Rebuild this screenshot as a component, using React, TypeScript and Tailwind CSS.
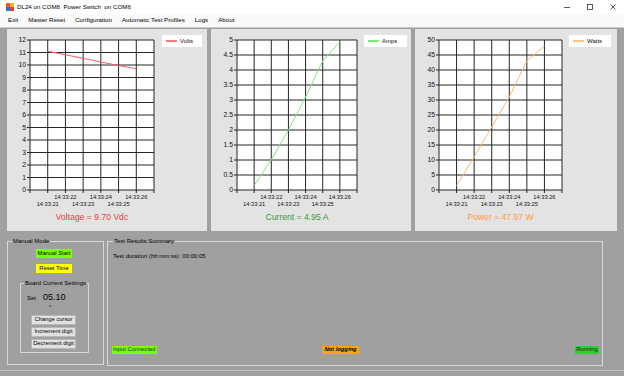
import React from 'react';

const times = ['14:33:21', '14:33:22', '14:33:23', '14:33:24', '14:33:25', '14:33:26'];

interface ChartProps {
  width: number;
  plotL: number;
  plotR: number;
  max: number;
  step: number;
  data: number[];
  line: string;
  legendLine: string;
  legend: string;
  legendX: number;
  legendW: number;
  title: string;
  titleColor: string;
}

function Chart({ width, plotL, plotR, max, step, data, line, legendLine, legend, legendX, legendW, title, titleColor }: ChartProps) {
  const top = 11;
  const bottom = 161;
  const n = Math.round(max / step);
  const dy = (bottom - top) / n;
  const dx = (plotR - plotL) / 7;
  const yOf = (v: number) => bottom - (v / max) * (bottom - top);
  const points = data.map((v, i) => `${plotL + (i + 1) * dx},${yOf(v)}`).join(' ');

  return (
    <div className="bg-[#e3e3e3] h-[202px] shrink-0" style={{ width }}>
      <svg width={width} height={202} className="block font-['Liberation_Sans',Arial,sans-serif]">
        <rect x={plotL} y={top} width={plotR - plotL} height={bottom - top} fill="#ffffff" />
        {Array.from({ length: n + 1 }).map((_, i) => {
          const y = bottom - i * dy;
          return (
            <g key={`h${i}`}>
              <line x1={plotL - 3} x2={plotR} y1={y} y2={y} stroke="#262626" strokeWidth={1} />
              <text x={plotL - 4} y={y + 2.4} textAnchor="end" fontSize={6.8} fill="#111">
                {String(i * step)}
              </text>
            </g>
          );
        })}
        {Array.from({ length: 8 }).map((_, k) => {
          const x = plotL + k * dx;
          return <line key={`v${k}`} x1={x} x2={x} y1={top} y2={bottom + 3} stroke="#262626" strokeWidth={1} />;
        })}
        <polyline points={points} fill="none" stroke={line} strokeWidth={1} />
        {times.map((t, i) => (
          <text
            key={t}
            x={plotL + (i + 1) * dx}
            y={i % 2 === 0 ? 177 : 170}
            textAnchor="middle"
            fontSize={5.7}
            fill="#111"
          >
            {t}
          </text>
        ))}
        <rect x={legendX} y={6} width={legendW} height={12} fill="#ffffff" />
        <line x1={legendX + 4} x2={legendX + 15} y1={12} y2={12} stroke={legendLine} strokeWidth={1.2} />
        <text x={legendX + 18} y={14.2} fontSize={6} fill="#111">
          {legend}
        </text>
        <text x={(plotL + plotR) / 2} y={191} textAnchor="middle" fontSize={8.6} fill={titleColor}>
          {title}
        </text>
      </svg>
    </div>
  );
}

function WinButton({ label }: { label: string }) {
  return (
    <div className="w-[45px] h-[10px] bg-[#e1e1e1] border border-[#b8b8b8] flex items-center justify-center text-[5.8px] leading-none text-black">
      {label}
    </div>
  );
}

export default function App() {
  return (
    <div className="w-[624px] h-[376px] bg-[#a0a0a0] overflow-hidden font-['Liberation_Sans',Arial,sans-serif] text-black">
      {/* title bar */}
      <div className="h-[14px] bg-white flex items-center pl-[6px] pr-[6px]">
        <svg width="8" height="8" viewBox="0 0 8 8" className="shrink-0">
          <rect x="0" y="0" width="4" height="4" fill="#f05a28" />
          <rect x="4" y="0" width="4" height="4" fill="#f7b52c" />
          <rect x="0" y="4" width="4" height="4" fill="#2f6fd6" />
          <rect x="4" y="4" width="4" height="4" fill="#e23c3c" />
        </svg>
        <span className="ml-[3px] text-[6.2px] leading-none whitespace-pre">DL24 on COM8  Power Switch  on COM6</span>
        <div className="ml-auto flex items-center gap-[17px] pr-[2px]">
          <svg width="6" height="6" viewBox="0 0 6 6">
            <line x1="0" y1="3.5" x2="6" y2="3.5" stroke="#333" strokeWidth="0.8" />
          </svg>
          <svg width="6" height="6" viewBox="0 0 6 6">
            <rect x="0.5" y="0.5" width="5" height="5" fill="none" stroke="#333" strokeWidth="0.8" />
          </svg>
          <svg width="6" height="6" viewBox="0 0 6 6">
            <path d="M0.5 0.5 L5.5 5.5 M5.5 0.5 L0.5 5.5" stroke="#333" strokeWidth="0.8" />
          </svg>
        </div>
      </div>

      {/* menu */}
      <div className="h-[14px] bg-[#fafafa] border-b border-[#c9c9c9] flex items-center gap-[10px] pl-[8px] text-[6.2px] leading-none">
        <span>Exit</span>
        <span>Master Reset</span>
        <span>Configuration</span>
        <span>Automatic Test Profiles</span>
        <span>Logs</span>
        <span>About</span>
      </div>

      {/* charts */}
      <div className="flex gap-[4px] pl-[7px] pt-[1px]">
        <Chart
          width={200}
          plotL={23}
          plotR={147}
          max={12}
          step={1}
          data={[11.1, 10.82, 10.53, 10.24, 9.96, 9.7]}
          line="#ff5a6e"
          legendLine="#ff2020"
          legend="Volts"
          legendX={155}
          legendW={40}
          title="Voltage = 9.70 Vdc"
          titleColor="#f23a3a"
        />
        <Chart
          width={200}
          plotL={26}
          plotR={146}
          max={5}
          step={0.5}
          data={[0.15, 1.0, 2.0, 3.1, 4.3, 4.95]}
          line="#7ee87e"
          legendLine="#20e020"
          legend="Amps"
          legendX={153}
          legendW={43}
          title="Current = 4.95 A"
          titleColor="#3a9a3a"
        />
        <Chart
          width={202}
          plotL={24}
          plotR={147}
          max={50}
          step={5}
          data={[1.5, 11, 21, 31, 43, 48]}
          line="#ffb868"
          legendLine="#ff9a30"
          legend="Watts"
          legendX={154}
          legendW={42}
          title="Power = 47.97 W"
          titleColor="#ff9a3a"
        />
      </div>

      {/* bottom */}
      <div className="flex gap-[3px] pl-[7px] pt-[6px]">
        <fieldset className="w-[97px] h-[128px] border border-[#d9d9d9] flex flex-col">
          <legend className="ml-[4px] px-[1px] text-[6px] leading-[8px]">Manual Mode</legend>
          <div className="flex flex-col">
            <div className="ml-[28px] mt-[4px] w-[36px] h-[9px] bg-[#7cff00] flex items-center justify-center text-[5.8px] leading-none">
              Manual Start
            </div>
            <div className="ml-[28px] mt-[6px] w-[36px] h-[9px] bg-[#ffff00] flex items-center justify-center text-[5.8px] leading-none">
              Reset Time
            </div>
            <fieldset className="ml-[12px] mt-[6px] w-[69px] h-[74px] border border-[#d9d9d9]">
              <legend className="ml-[3px] px-[1px] text-[6px] leading-[8px]">Board Current Settings</legend>
              <div className="flex items-baseline pl-[6px] mt-[6px] h-[12px]">
                <span className="text-[6px] leading-none">Set</span>
                <span className="ml-[7px] text-[9px] leading-none">05.10</span>
              </div>
              <div className="pl-[28px] h-[6px] text-[5px] leading-none">^</div>
              <div className="flex flex-col gap-[2px] pl-[10px] mt-[4px]">
                <WinButton label="Change cursor" />
                <WinButton label="Increment digit" />
                <WinButton label="Decrement digit" />
              </div>
            </fieldset>
          </div>
        </fieldset>

        <fieldset className="w-[496px] h-[129px] border border-[#d9d9d9] pl-[5px]">
          <legend className="px-[1px] text-[6px] leading-[8px]">Test Results Summary</legend>
          <div className="h-[120px] flex flex-col justify-between pt-[7px] pb-[11px]">
            <div className="text-[6px] leading-[8px] whitespace-pre">Test duration (hh:mm:ss)  00:00:05</div>
            <div className="flex items-center pr-[3px] -ml-[1px]">
              <div className="w-[45px] h-[8px] bg-[#7cff00] flex items-center pl-[1px] text-[5.8px] leading-none text-[#103010] whitespace-nowrap">
                Input Connected
              </div>
              <div className="ml-[165px] w-[37px] h-[8px] bg-[#ffa500] flex items-center justify-center text-[5.8px] leading-none italic font-bold whitespace-nowrap">
                Not logging
              </div>
              <div className="ml-auto w-[24px] h-[8px] bg-[#32cd32] flex items-center justify-center text-[5.8px] leading-none text-[#0a2a0a] whitespace-nowrap">
                Running
              </div>
            </div>
          </div>
        </fieldset>
      </div>
      <div className="mt-[4px] h-px bg-[#c4c4c4]" />
    </div>
  );
}
